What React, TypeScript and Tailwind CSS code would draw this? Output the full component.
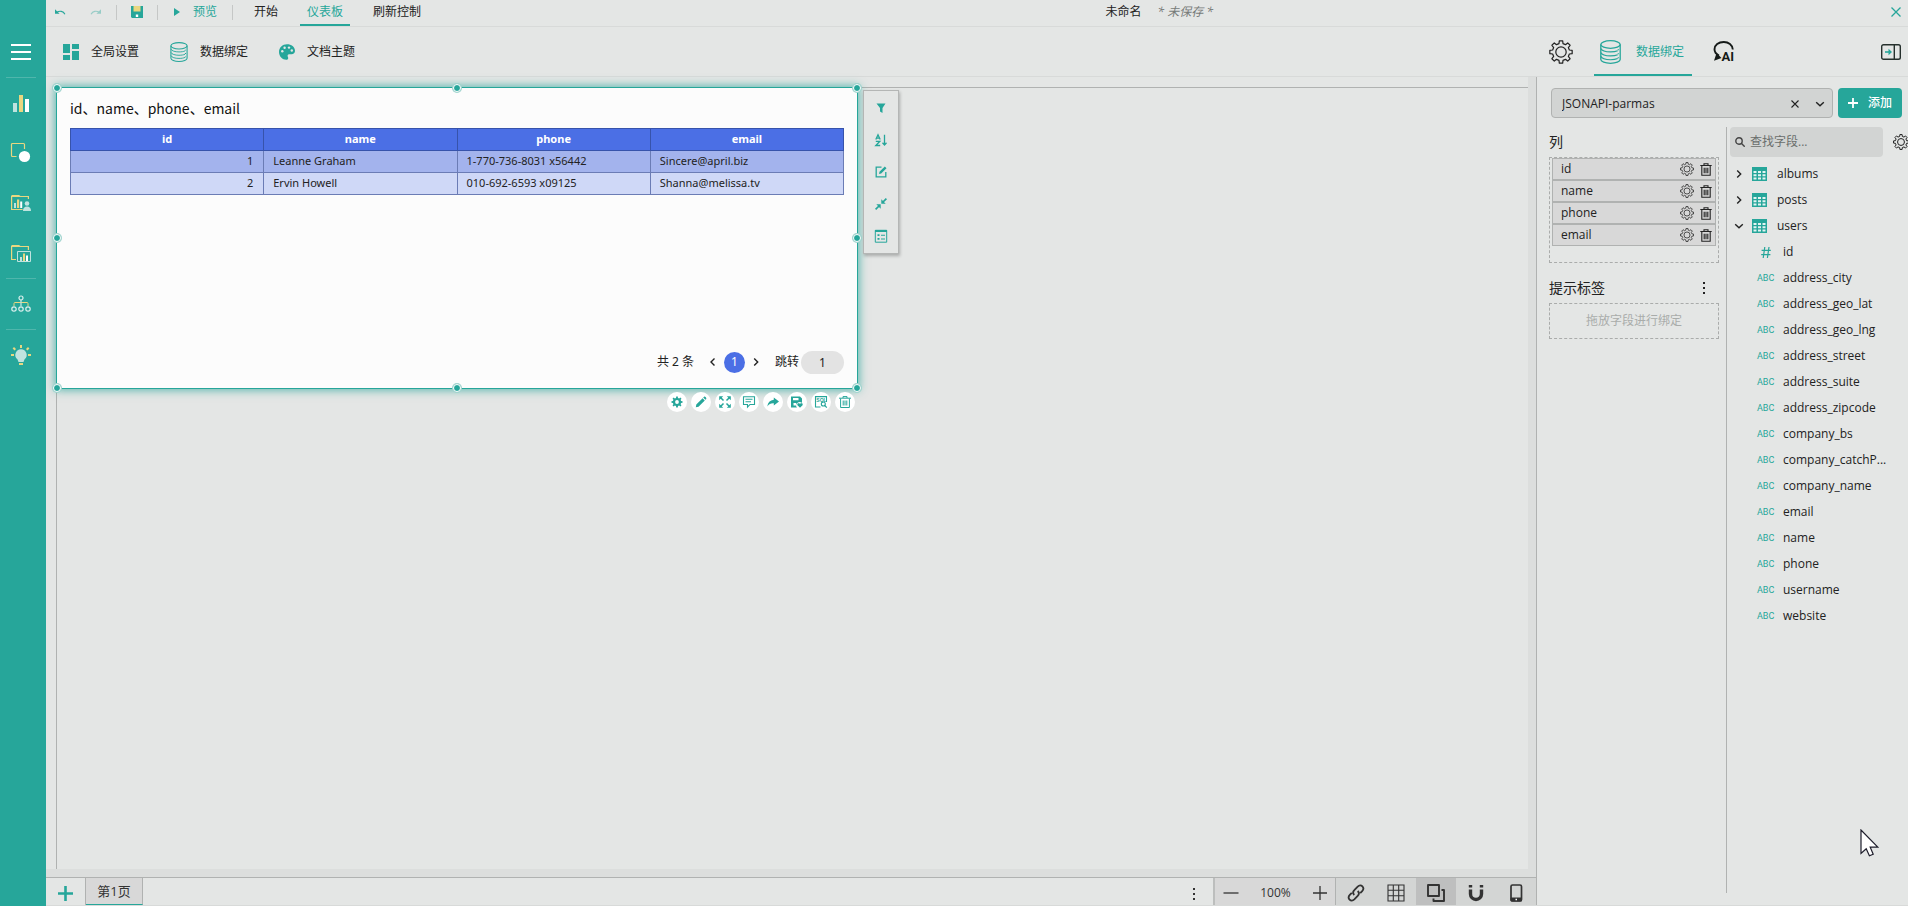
import type { ReactNode } from "react";

const cjk = "font-['Open_Sans','Noto_Sans_CJK_SC',sans-serif]";

function gearPath(teeth: number, outer: number, inner: number, center = 12): string {
  const step = (Math.PI * 2) / teeth;
  const parts: string[] = [];
  for (let i = 0; i < teeth; i += 1) {
    const base = i * step - Math.PI / 2;
    const corners: [number, number][] = [
      [-0.3, inner],
      [-0.19, outer],
      [0.19, outer],
      [0.3, inner],
    ];
    corners.forEach(([t, r]) => {
      const a = base + t * step;
      parts.push(`${(center + r * Math.cos(a)).toFixed(2)} ${(center + r * Math.sin(a)).toFixed(2)}`);
    });
  }
  return `M${parts.join("L")}Z`;
}

const GEAR = gearPath(8, 11.3, 8.6);
const SMALL_GEAR = gearPath(8, 5.6, 4.2, 6);

function Gear({ className, width = 1.4 }: { className: string; width?: number }) {
  return (
    <svg viewBox="0 0 24 24" className={className} fill="none" stroke="currentColor" strokeWidth={width} strokeLinejoin="round" aria-hidden="true">
      <path d={GEAR} />
      <circle cx="12" cy="12" r="5.2" />
    </svg>
  );
}

function Database({ className }: { className: string }) {
  return (
    <svg viewBox="0 0 21 24" className={className} fill="none" stroke="currentColor" strokeWidth="1.3" aria-hidden="true">
      <ellipse cx="10.5" cy="4.5" rx="9.7" ry="3.8" />
      <path d="M.8 4.5v15c0 2.1 4.3 3.8 9.7 3.8s9.7-1.7 9.7-3.8v-15" />
      <path d="M.8 8.500c1 2.300 5 3.400 9.700 3.400 3 0 5.500-.4 7.200-1.200M.8 12.500c1 2.300 5 3.400 9.700 3.400 3 0 5.500-.4 7.200-1.200M.8 16.300c1 2.300 5 3.400 9.700 3.400 3 0 5.500-.4 7.200-1.200" strokeWidth="1.1" />
      <path d="M18.300 9.300v1M18.300 13.300v1M18.300 17.300v1" />
    </svg>
  );
}

function Trash({ className }: { className: string }) {
  return (
    <svg viewBox="0 0 12 13" className={className} fill="none" stroke="currentColor" strokeWidth="1.1" aria-hidden="true">
      <path d="M.3 2.500h11.400M4 2.300V.7h4v1.600M1.800 2.800v9.500h8.400V2.800M4.200 4.800v5.500M6 4.800v5.500M7.800 4.800v5.500" />
    </svg>
  );
}

function TableIcon() {
  return (
    <svg viewBox="0 0 15 14" className="h-[14px] w-[15px] text-[#26a69a]" aria-hidden="true">
      <path d="M0 0h15v14H0z" fill="currentColor" />
      <path d="M1.500 4h3v2h-3zM6 4h3v2H6zM10.500 4h3v2h-3zM1.500 7.300h3v2h-3zM6 7.300h3v2H6zM10.500 7.300h3v2h-3zM1.500 10.600h3v2h-3zM6 10.600h3v2H6zM10.500 10.600h3v2h-3z" fill="#e3f4f2" />
    </svg>
  );
}

function Chevron({ dir, className = "h-[10px] w-[10px]" }: { dir: "left" | "right" | "down"; className?: string }) {
  const paths = { left: "M6.500 1.500 3 5l3.500 3.500", right: "M3.200 1.500 6.700 5 3.200 8.500", down: "M1.200 3.200 5 6.800l3.800-3.600" };
  return (
    <svg viewBox="0 0 10 10" className={className} fill="none" stroke="currentColor" strokeWidth="1.4" aria-hidden="true">
      <path d={paths[dir]} />
    </svg>
  );
}

function Dots() {
  return (
    <svg viewBox="0 0 4 14" className="h-[14px] w-[4px]" fill="currentColor" aria-hidden="true">
      <path d="M1 1h2v2H1zM1 6h2v2H1zM1 11h2v2H1z" />
    </svg>
  );
}

function SideButton({ label, children }: { label: string; children: ReactNode }) {
  return (
    <button aria-label={label} className="flex h-[50px] w-full items-center pl-[11px]">
      <svg viewBox="0 0 20 20" className="h-5 w-5 overflow-visible" fill="none" aria-hidden="true">
        {children}
      </svg>
    </button>
  );
}

function SideRule() {
  return <div className="ml-[6px] h-px w-[30px] bg-[#4fb6ac]" />;
}

function Sidebar() {
  return (
    <nav className="w-[46px] shrink-0 bg-[#26a69a] pt-[27px]">
      <SideButton label="菜单">
        <path d="M0 3h20M0 10h20M0 17h20" stroke="#fff" strokeWidth="2" />
      </SideButton>
      <SideRule />
      <SideButton label="图表">
        <path d="M2 10h4v9H2z" fill="#bfe3df" />
        <path d="M8 2h4v17H8z" fill="#e9d780" />
        <path d="M14 6h4v13h-4z" fill="#fff" />
      </SideButton>
      <SideButton label="形状">
        <path d="M5.500 13.500h-4a1 1 0 0 1-1-1v-11a1 1 0 0 1 1-1h11a1 1 0 0 1 1 1V6" stroke="#e9d780" strokeWidth="1.2" />
        <circle cx="13.5" cy="13.5" r="5.6" fill="#fff" />
      </SideButton>
      <SideButton label="我的模板">
        <path d="M.6 3v13.500h11M.6 5.500M9 3.500h8.400V6" stroke="#e9d780" strokeWidth="1.2" />
        <path d="M0 4V3l1-1h7l1.500 1-.5 1z" fill="#e9d780" />
        <path d="M3 10h2v5H3z" fill="#bfe3df" />
        <path d="M6 6.500h2.200V15H6z" fill="#e9d780" />
        <path d="M9.200 8.500h2V15h-2z" fill="#fff" />
        <circle cx="16" cy="10.5" r="2.3" fill="#bfe3df" />
        <path d="M12 18c0-3 1.500-4.500 4-4.500s4 1.500 4 4.500z" fill="#bfe3df" />
      </SideButton>
      <SideButton label="模板库">
        <path d="M.6 3v13.500H5M9 3.500h8.400V7" stroke="#e9d780" strokeWidth="1.2" />
        <path d="M0 4V3l1-1h7l1.500 1-.5 1z" fill="#e9d780" />
        <path d="M6.500 8.500h13v10h-13z" stroke="#bfe3df" />
        <path d="M9 14h2v4H9z" fill="#bfe3df" />
        <path d="M12 10.500h2V18h-2z" fill="#e9d780" />
        <path d="M15 12.500h2V18h-2z" fill="#fff" />
      </SideButton>
      <SideRule />
      <SideButton label="组织">
        <path d="M3 12v-2.500a1 1 0 0 1 1-1h12a1 1 0 0 1 1 1V12" stroke="#e9d780" />
        <path d="M10 6v6" stroke="#bfe3df" strokeWidth="1.3" />
        <g stroke="#d9efed" strokeWidth="1.2">
          <circle cx="10" cy="4" r="2" />
          <circle cx="3" cy="15" r="2.2" />
          <circle cx="10" cy="15" r="2.2" />
          <circle cx="17" cy="15" r="2.2" />
        </g>
      </SideButton>
      <SideRule />
      <SideButton label="提示">
        <path d="M10 0v3M2.300 2.800l2 2M17.700 2.800l-2 2M0 10h3M17 10h3M8 19h4" stroke="#e9d780" strokeWidth="2" />
        <path d="M10 4.200a5.700 5.700 0 0 0-3.600 10.100L7.500 17h5l1.100-2.700A5.700 5.700 0 0 0 10 4.200z" fill="#bfe3df" />
      </SideButton>
    </nav>
  );
}

function Rule() {
  return <span className="h-[15px] w-px bg-[#c5c7c6]" />;
}

function TopBar() {
  return (
    <header className="flex h-[27px] shrink-0 items-start border-b border-[#d8dad9] text-xs text-[#26a69a]">
      <div className="flex h-6 items-center pl-[9px]">
        <button aria-label="撤销" className="w-[11px]">
          <svg viewBox="0 0 12 8" className="h-2 w-[11px]" fill="none" stroke="currentColor" strokeWidth="1.3" aria-hidden="true">
            <path d="M2 4.300C5 2.400 9 2.800 10.800 6.500" />
            <path d="M0 1v5h5z" fill="currentColor" stroke="none" />
          </svg>
        </button>
        <button aria-label="重做" className="ml-6 w-[11px] opacity-40">
          <svg viewBox="0 0 12 8" className="h-2 w-[11px]" fill="none" stroke="currentColor" strokeWidth="1.3" aria-hidden="true">
            <path d="M10 4.300C7 2.400 3 2.800 1.200 6.500" />
            <path d="M12 1v5H7z" fill="currentColor" stroke="none" />
          </svg>
        </button>
        <span className="ml-[15px] flex"><Rule /></span>
        <button aria-label="保存" className="ml-[14px]">
          <svg viewBox="0 0 12 12" className="h-3 w-3" aria-hidden="true">
            <path d="M0 0h12v12H1l-1-1z" fill="#26a69a" />
            <path d="M2.500 0h7v5.500h-7z" fill="#e9d780" />
            <path d="M4.800 8.500h2.400V11H4.800z" fill="#fff" />
          </svg>
        </button>
        <span className="ml-[14px] flex"><Rule /></span>
        <button className="ml-4 flex items-center gap-[13px]">
          <svg viewBox="0 0 6 8" className="h-2 w-[6px]" fill="currentColor" aria-hidden="true"><path d="M0 0l6 4-6 4z" /></svg>
          预览
        </button>
        <span className="ml-[15px] flex"><Rule /></span>
      </div>
      <div className="ml-[14px] flex h-[26px] text-[#222]">
        <button className="h-6 px-[7px]">开始</button>
        <button className="ml-[15px] h-[26px] border-b-2 border-[#26a69a] px-[7px] text-[#26a69a]">仪表板</button>
        <button className="ml-4 h-6 px-[7px]">刷新控制</button>
      </div>
      <div className="ml-auto flex h-6 items-center gap-4 pr-[695px] text-[#222]">
        <span>未命名</span>
        <em className="text-[#777b79]">* 未保存 *</em>
      </div>
      <button aria-label="关闭" className="-ml-[17px] flex h-6 items-center pr-[7px]">
        <svg viewBox="0 0 10 10" className="h-[10px] w-[10px]" fill="none" stroke="currentColor" strokeWidth="1.3" aria-hidden="true"><path d="M.5.5l9 9M9.500.5l-9 9" /></svg>
      </button>
    </header>
  );
}

function ToolBar() {
  return (
    <div className="flex h-[50px] shrink-0 items-center justify-between border-b border-[#d8dad9] text-xs text-[#222]">
      <div className="flex items-center gap-[31px] pl-[17px]">
        <button className="flex items-center gap-3">
          <svg viewBox="0 0 16 16" className="h-4 w-4" fill="#26a69a" aria-hidden="true"><path d="M0 0h7v9H0zM9 0h7v5H9zM0 11h7v5H0zM9 7h7v9H9z" /></svg>
          全局设置
        </button>
        <button className="flex items-center gap-3">
          <Database className="h-5 w-[18px] text-[#26a69a]" />
          数据绑定
        </button>
        <button className="flex items-center gap-3">
          <svg viewBox="0 0 16 16" className="h-4 w-4" aria-hidden="true">
            <path d="M8 .3C3.500.3 0 3.600 0 8c0 4.500 3.400 7.700 7.300 7.700 1.300 0 1.900-.7 1.900-1.500 0-1.500-.9-1.600-.5-3 .2-.8 1-1 1.800-1h2C14.600 10.200 16 9 16 7c0-4-3.700-6.700-8-6.700z" fill="#26a69a" />
            <g fill="#e4e6e5"><circle cx="3.3" cy="7.3" r="1.2" /><circle cx="5.6" cy="3.8" r="1.2" /><circle cx="10" cy="3.6" r="1.2" /><circle cx="12.8" cy="6.5" r="1.2" /></g>
          </svg>
          文档主题
        </button>
      </div>
      <div className="flex h-[49px] w-[359px] items-center">
        <button aria-label="属性设置"><Gear className="h-6 w-6" width={1.2} /></button>
        <button className="ml-[21px] flex h-full items-center gap-[15px] border-b-2 border-[#26a69a] pl-[6px] pr-2 pt-[2px] text-[#26a69a]">
          <Database className="h-6 w-[21px]" />
          数据绑定
        </button>
        <button aria-label="AI" className="ml-[21px]">
          <svg viewBox="0 0 21 21" className="h-[21px] w-[21px] overflow-visible" fill="none" stroke="#151a18" strokeWidth="1.9" aria-hidden="true">
            <path d="M19.800 8.500C19.500 3.800 15.500 1 10.800 1 5.500 1 1.500 4 1.500 8.300c0 3 1.800 5 4.500 6.200" />
            <path d="M1 19.800 3.600 12l4.900 5z" fill="#151a18" stroke="none" />
            <text x="8.4" y="20" fontFamily="Roboto, Liberation Sans, sans-serif" fontWeight="700" fontSize="13" fill="#151a18" stroke="none">AI</text>
          </svg>
        </button>
        <button aria-label="收起面板" className="ml-auto pr-[7px]">
          <svg viewBox="0 0 20 16" className="h-4 w-5" fill="none" stroke="#26302d" strokeWidth="1.4" aria-hidden="true">
            <rect x=".7" y=".7" width="18.6" height="14.6" rx="1.8" />
            <path d="M13.300.7v14.600" />
            <path d="M4 8h4" stroke="#26a69a" strokeWidth="1.6" />
            <path d="M7.500 4.800 11 8l-3.500 3.200z" fill="#26a69a" stroke="none" />
          </svg>
        </button>
      </div>
    </div>
  );
}

const columns = ["id", "name", "phone", "email"];
const rows = [
  ["1", "Leanne Graham", "1-770-736-8031 x56442", "Sincere@april.biz"],
  ["2", "Ervin Howell", "010-692-6593 x09125", "Shanna@melissa.tv"],
];

const handles = [
  "left-0 top-0", "left-1/2 top-0", "left-full top-0",
  "left-0 top-1/2", "left-full top-1/2",
  "left-0 top-full", "left-1/2 top-full", "left-full top-full",
];

const sideTools: { label: string; icon: ReactNode }[] = [
  { label: "筛选", icon: <path d="M1.500 1.500h9L7.500 6v5L5 9.500V6z" fill="currentColor" stroke="none" /> },
  {
    label: "排序",
    icon: (
      <>
        <path d="M.8 5.500 3 .8l2.200 4.700M1.500 4.200h3M.8 7.300h4L.8 11.500h4.400" />
        <path d="M9.500.8v10M7.500 8.800l2 2.200 2-2.200" />
      </>
    ),
  },
  { label: "编辑", icon: <><path d="M6.500 1.200H1.200v9.600h9.600V6" /><path d="M4 8l.5-2.200L9.800.5l1.700 1.700L6.200 7.500z" fill="currentColor" stroke="none" /></> },
  { label: "收拢", icon: <><path d="M.6 11.400 4 8M11.400.6 8 4" strokeWidth="1.7" /><path d="M1.300 6.300h4.400v4.400zM6.300 1.300v4.400h4.400z" fill="currentColor" stroke="none" /></> },
  { label: "图例", icon: <><path d="M.3.3h11.400v11.900H.3z" strokeWidth="1" /><path d="M0 0h12v2H0zM2.500 4.300h2v1.800h-2zM2.500 8h2v1.800h-2zM6 4.800h4v1H6zM6 8.500h4v1H6z" fill="currentColor" stroke="none" /></> },
];

const actions: { label: string; icon: ReactNode }[] = [
  { label: "设置", icon: <><path d={SMALL_GEAR} fill="currentColor" stroke="none" /><circle cx="6" cy="6" r="1.9" fill="#fff" stroke="none" /></> },
  { label: "编辑", icon: <path d="M.8 11.200l.5-2.700 6.300-6.300 2.200 2.200-6.300 6.300zM8.200 1.600l.9-.9c.8-.5 2.600 1.200 2.200 2.200l-.9.900z" fill="currentColor" stroke="none" /> },
  { label: "最大化", icon: <><path d="M1.500 1.500 4.500 4.500M10.500 1.500l-3 3M1.500 10.500l3-3M10.500 10.500l-3-3" strokeWidth="1.5" /><path d="M.2.2h4l-4 4zM11.800.2h-4l4 4zM.2 11.800h4l-4-4zM11.800 11.800h-4l4-4z" fill="currentColor" stroke="none" /></> },
  { label: "备注", icon: <path d="M.5.8h11v7.700H7l-2.500 2.700V8.500h-4zM2.500 3.300h7M2.500 5.800h5.500" /> },
  { label: "分享", icon: <path d="M6.800 1.500 12 5.500 6.800 9.500V7.200C4 7 2 8 .3 10.500.8 6.500 3 4.200 6.800 3.800z" fill="currentColor" stroke="none" /> },
  { label: "另存", icon: <><path d="M0 .5h9L11 2.500v4.800A3 3 0 0 0 6 11.500H0z" fill="currentColor" stroke="none" /><path d="M2 2h5.500v2.300H2zM2.500 7h2.700v2.500H2.500z" fill="#fff" stroke="none" /><path d="M9 12 6.200 9.200a1.500 1.500 0 0 1 2.800-1.500 1.500 1.500 0 0 1 2.800 1.500z" fill="currentColor" stroke="#fff" strokeWidth=".5" /></> },
  { label: "查询", icon: <><path d="M5.500 11H.5V.6h11V6" /><text x="1.3" y="5.5" fontSize="5" fontWeight="700" fontFamily="Liberation Sans, sans-serif" fill="currentColor" stroke="none">SQL</text><circle cx="8.3" cy="8" r="2" /><path d="M9.800 9.500 11.800 11.600" /></> },
  { label: "删除", icon: <path d="M0 2.200h12M4 2V.6h4V2M1.600 2.500v9h8.800v-9M4.200 4.500v5M6 4.500v5M7.800 4.500v5" strokeWidth="1" /> },
];

function Widget() {
  return (
    <section className="absolute -left-px -top-px h-[302px] w-[802px] border border-[#26a69a] bg-[#fcfcfc] shadow-[0_0_9px_1px_rgba(38,166,154,0.75)]">
      <div className="flex h-full flex-col px-[13px] pb-[14px] font-['Noto_Sans','Noto_Sans_CJK_SC',sans-serif]">
        <h2 className="flex h-10 items-center font-['Noto_Sans_CJK_SC',sans-serif] text-sm text-[#111]">id、name、phone、email</h2>
        <table className="w-full table-fixed border-collapse text-[11px] text-[#222]">
          <thead>
            <tr className="h-[22px] bg-[#4b6fe5] text-white">
              {columns.map((c) => (
                <th key={c} className="border border-[#3753ab] p-0 text-center font-bold">{c}</th>
              ))}
            </tr>
          </thead>
          <tbody>
            {rows.map((r, i) => (
              <tr key={r[0]} className={i === 0 ? "h-[22px] bg-[#a3b3ed]" : "h-[22px] bg-[#cfd8f7]"}>
                {r.map((v, j) => (
                  <td key={v} className={j === 0 ? "border border-[#6b7cb5] p-0 pr-[10px] text-right" : "border border-[#6b7cb5] p-0 pl-[9px]"}>{v}</td>
                ))}
              </tr>
            ))}
          </tbody>
        </table>
        <div className="mt-auto flex h-6 items-center justify-end text-xs text-[#222]">
          <span>共 2 条</span>
          <button aria-label="上一页" className="ml-[14px]"><Chevron dir="left" /></button>
          <button className="ml-[6px] h-[21px] w-[21px] rounded-full bg-[#4b6fe5] text-white">1</button>
          <button aria-label="下一页" className="ml-[6px]"><Chevron dir="right" /></button>
          <label htmlFor="jump" className="ml-[14px]">跳转</label>
          <input id="jump" defaultValue="1" className="ml-[2px] h-[23px] w-[43px] rounded-full bg-[#e3e3e3] text-center" />
        </div>
      </div>
      <div className="pointer-events-none absolute inset-0">
        {handles.map((h) => (
          <span key={h} className={`${h} absolute h-[8px] w-[8px] -translate-x-1/2 -translate-y-1/2 rounded-full border border-white bg-[#26a69a] shadow-[0_0_0_1px_#9fd3cd]`} />
        ))}
      </div>
      <div className="absolute left-full top-[2px] ml-[6px] flex w-9 flex-col border border-[#b4b6b5] bg-[#e4e6e5] pb-[2px] shadow-[1px_2px_3px_rgba(0,0,0,0.25)]">
        {sideTools.map((t) => (
          <button key={t.label} aria-label={t.label} className="flex h-8 items-center justify-center pt-[2px] text-[#26a69a]">
            <svg viewBox="0 0 12 12" className="h-3 w-3 overflow-visible" fill="none" stroke="currentColor" strokeWidth="1.3" aria-hidden="true">{t.icon}</svg>
          </button>
        ))}
      </div>
      <div className="absolute right-[2px] top-full mt-[4px] flex gap-1">
        {actions.map((a) => (
          <button key={a.label} aria-label={a.label} className="flex h-5 w-5 items-center justify-center rounded-full bg-white text-[#26a69a]">
            <svg viewBox="0 0 12 12" className="h-3 w-3 overflow-visible" fill="none" stroke="currentColor" strokeWidth="1.1" aria-hidden="true">{a.icon}</svg>
          </button>
        ))}
      </div>
    </section>
  );
}

const statusTools: { label: string; active?: boolean; icon: ReactNode }[] = [
  { label: "链接", icon: <path d="M7.300 11c-1.700-1.700-1.500-3.300 0-4.800l3.400-3.600c1.600-1.600 3.400-1.600 4.700-.2s1.300 3.100-.2 4.700l-2 2.100M10.700 7c1.700 1.700 1.500 3.300 0 4.800l-3.400 3.600c-1.600 1.600-3.400 1.600-4.700.2s-1.300-3.100.2-4.700l2-2.100" strokeWidth="1.8" /> },
  { label: "网格", icon: <path d="M1 1h16v16H1zM1 6.300h16M1 11.700h16M6.300 1v16M11.700 1v16" strokeWidth="1.1" /> },
  { label: "图层", active: true, icon: <path d="M1 1h11v11H1zM14.500 6H17v11H6.500v-2.500" strokeWidth="1.9" strokeLinejoin="round" /> },
  { label: "吸附", icon: <><path d="M3.500 5.500v4.500a5.500 5.500 0 0 0 11 0V5.500" strokeWidth="3.4" /><path d="M3.500 1v2.500M14.500 1v2.500" strokeWidth="3.4" /></> },
  { label: "手机", icon: <><rect x="4" y="1" width="10.5" height="16" rx="1.5" strokeWidth="1.7" /><path d="M4 14h10.500v3H4z" fill="currentColor" /><path d="M8.500 15.500h1.500" stroke="#fff" strokeWidth="1.3" /></> },
];

function StatusBar() {
  return (
    <footer className="flex h-[28px] shrink-0 border-t border-[#b0b2b1] text-[#333]">
      <button aria-label="添加页面" className="flex w-10 items-center justify-center border-r border-[#b0b2b1] pt-[4px] text-[#26a69a]">
        <svg viewBox="0 0 15 15" className="h-[15px] w-[15px]" stroke="currentColor" strokeWidth="2.6" aria-hidden="true"><path d="M0 7.500h15M7.500 0v15" /></svg>
      </button>
      <button className="w-[57px] border-b border-r border-b-[#26a69a] border-r-[#b0b2b1] bg-[#d8d8d8] pt-px text-[13px]">第1页</button>
      <button aria-label="更多" className="ml-auto flex w-10 items-center justify-center border-r-2 border-[#bcbebd] pt-1"><Dots /></button>
      <div className="flex w-[121px] items-center justify-between border-r border-[#b0b2b1] bg-[#d8d8d8] pl-2 pr-[7px] pt-[2px] text-xs">
        <button aria-label="缩小"><svg viewBox="0 0 16 16" className="h-4 w-4" stroke="currentColor" strokeWidth="1.3" aria-hidden="true"><path d="M.5 8h15" /></svg></button>
        <span>100%</span>
        <button aria-label="放大"><svg viewBox="0 0 16 16" className="h-4 w-4" stroke="currentColor" strokeWidth="1.3" aria-hidden="true"><path d="M1 8h14M8 1v14" /></svg></button>
      </div>
      {statusTools.map((t) => (
        <button key={t.label} aria-label={t.label} className={t.active ? "flex w-10 items-center justify-center bg-[#bebfbf] pt-[2px]" : "flex w-10 items-center justify-center bg-[#d3d5d4] pt-[2px]"}>
          <svg viewBox="0 0 18 18" className="h-[18px] w-[18px]" fill="none" stroke="currentColor" aria-hidden="true">{t.icon}</svg>
        </button>
      ))}
    </footer>
  );
}

function BoundFields() {
  return (
    <div className="w-[190px] shrink-0 border-r border-[#b0b2b1] pl-3 pr-[7px] text-[#222]">
      <h3 className="flex h-[30px] items-center text-sm">列</h3>
      <ul className="h-[106px] border border-dashed border-[#aaacab] px-[2px] text-xs">
        {columns.map((c) => (
          <li key={c} className="flex h-[22px] items-center border border-[#b0b2b1] bg-[#d8d8d8] pl-2 pr-[3px]">
            <span className="flex-1">{c}</span>
            <button aria-label={`${c} 设置`} className="mr-[6px]"><Gear className="h-[14px] w-[14px]" width={1.3} /></button>
            <button aria-label={`${c} 删除`}><Trash className="h-[13px] w-3" /></button>
          </li>
        ))}
      </ul>
      <div className="flex h-10 items-center justify-between pr-[13px] pt-[10px] text-sm">
        <h3>提示标签</h3>
        <button aria-label="更多选项"><Dots /></button>
      </div>
      <div className="flex h-9 items-center justify-center border border-dashed border-[#aaacab] text-xs text-[#a9acaa]">拖放字段进行绑定</div>
    </div>
  );
}

const userFields = [
  "id", "address_city", "address_geo_lat", "address_geo_lng", "address_street", "address_suite", "address_zipcode",
  "company_bs", "company_catchP...", "company_name", "email", "name", "phone", "username", "website",
];

function FieldTree() {
  return (
    <div className="min-w-0 flex-1 overflow-hidden pl-[3px] text-xs text-[#222]">
      <div className="flex h-[30px] items-center gap-[10px]">
        <label className="flex h-[30px] w-[153px] shrink-0 items-center gap-[5px] rounded bg-[#d2d4d3] px-[5px]">
          <svg viewBox="0 0 10 10" className="h-[10px] w-[10px] shrink-0" fill="none" stroke="#444" strokeWidth="1.4" aria-hidden="true"><circle cx="4" cy="4" r="3.2" /><path d="M6.300 6.300l3.400 3.400" /></svg>
          <input aria-label="查找字段" placeholder="查找字段..." className="w-full min-w-0 bg-transparent outline-none placeholder:text-[#6a6e6c]" />
        </label>
        <button aria-label="字段设置" className="shrink-0"><Gear className="h-4 w-4" width={1.5} /></button>
      </div>
      <ul className="pt-1">
        {["albums", "posts", "users"].map((t) => (
          <li key={t} className="flex h-[26px] items-center pl-1">
            <button aria-label={`展开 ${t}`} className="mr-2 text-[#222]"><Chevron dir={t === "users" ? "down" : "right"} /></button>
            <TableIcon />
            <span className="pl-[10px]">{t}</span>
          </li>
        ))}
        {userFields.map((f) => (
          <li key={f} className="flex h-[26px] items-center pl-[27px]">
            <span className="flex w-[26px] text-[#26a69a]">
              {f === "id" ? (
                <svg viewBox="0 0 10 11" className="ml-1 h-[11px] w-[10px]" fill="none" stroke="currentColor" strokeWidth="1.2" aria-hidden="true"><path d="M3.800 0 2.200 11M8 0 6.400 11M.6 3.400h9.200M.2 7.600h9.200" /></svg>
              ) : (
                <span className="font-['Roboto',sans-serif] text-[9px] leading-4">ABC</span>
              )}
            </span>
            <span>{f}</span>
          </li>
        ))}
      </ul>
    </div>
  );
}

function DataPanel() {
  return (
    <aside className="flex w-[372px] shrink-0 flex-col border-l border-[#b0b2b1] pb-3 pt-[11px] text-xs text-[#222]">
      <div className="flex gap-[5px] pl-[14px] pr-[6px]">
        <div className="flex h-[30px] flex-1 items-center rounded border border-[#b0b2b1] bg-[#d2d4d3] pl-[10px] pr-[7px] pt-[2px]">
          <select aria-label="数据源" className="flex-1 appearance-none bg-transparent outline-none">
            <option>JSONAPI-parmas</option>
          </select>
          <button aria-label="清除" className="mr-4">
            <svg viewBox="0 0 8 8" className="h-2 w-2" stroke="currentColor" strokeWidth="1.1" aria-hidden="true"><path d="M.5.5l7 7M7.500.5l-7 7" /></svg>
          </button>
          <Chevron dir="down" />
        </div>
        <button className="flex h-[30px] w-16 items-center gap-[10px] rounded bg-[#26a69a] pl-[10px] font-medium text-white">
          <svg viewBox="0 0 10 10" className="h-[10px] w-[10px]" stroke="currentColor" strokeWidth="1.8" aria-hidden="true"><path d="M0 5h10M5 0v10" /></svg>
          添加
        </button>
      </div>
      <div className="mt-[9px] flex min-h-0 flex-1">
        <BoundFields />
        <FieldTree />
      </div>
    </aside>
  );
}

export default function App() {
  return (
    <div className={`${cjk} flex h-screen overflow-hidden bg-[#e4e6e5]`}>
      <Sidebar />
      <div className="flex min-w-0 flex-1 flex-col border-b border-[#d8dad9]">
        <TopBar />
        <ToolBar />
        <div className="flex min-h-0 flex-1">
          <main className="flex min-w-0 flex-1 flex-col">
            <div className="flex min-h-0 flex-1 border-b-8 border-r-8 border-[#dcdedd] pl-[10px] pt-[10px]">
              <div className="relative flex-1 border-l border-t border-[#b0b2b1]">
                <Widget />
              </div>
            </div>
            <StatusBar />
          </main>
          <DataPanel />
        </div>
      </div>
      <svg viewBox="0 0 20 28" className="pointer-events-none absolute bottom-[49px] right-[28px] h-7 w-5" fill="#fff" stroke="#1d1d2b" strokeWidth="1.2" aria-hidden="true">
        <path d="M1 1v23.500l5.200-4.800 3.200 7 3.800-1.500-3-7h7.600z" />
      </svg>
    </div>
  );
}
